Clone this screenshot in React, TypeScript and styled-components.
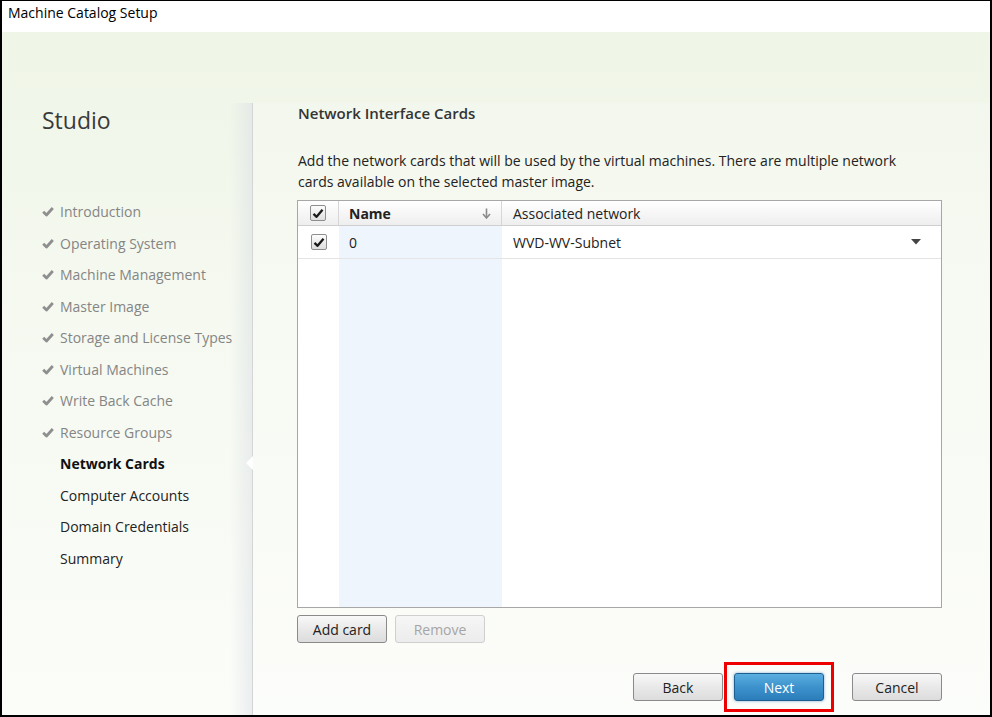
import React from "react";
import styled, { createGlobalStyle } from "styled-components";

const Global = createGlobalStyle`
  html, body { margin: 0; padding: 0; width: 992px; height: 717px; overflow: hidden; background: #fff; }
  body { font-family: "Open Sans", "Noto Sans", sans-serif; }
  * { box-sizing: border-box; }
`;

const Window = styled.div`
  width: 992px;
  height: 717px;
  border: 2px solid #000;
  border-top-width: 1px;
  display: flex;
  flex-direction: column;
  background: #fff;
`;

const TitleBar = styled.div`
  height: 31px;
  flex: none;
  background: #fff;
  padding: 3px 0 0 6px;
  font-size: 14px;
  line-height: 18px;
  color: #000;
`;

const Body = styled.div`
  flex: 1;
  display: flex;
  min-height: 0;
  background: linear-gradient(#eff5e7 0%, #f5f9f0 40%, #fbfdf9 100%);
`;

const Sidebar = styled.aside`
  width: 251px;
  flex: none;
  position: relative;
  padding: 73px 0 0 40px;

  &::after {
    content: "";
    position: absolute;
    top: 71px;
    right: 0;
    bottom: 0;
    width: 22px;
    background: linear-gradient(to right, rgba(225, 229, 234, 0) 0%, rgba(214, 219, 226, 0.45) 100%);
    border-right: 1px solid #d3d5d7;
  }
`;

const Notch = styled.div`
  position: absolute;
  right: 0;
  top: 424px;
  width: 0;
  height: 0;
  border-top: 7px solid transparent;
  border-bottom: 7px solid transparent;
  border-right: 7px solid #fff;
  z-index: 1;
`;

const Brand = styled.h1`
  margin: 0;
  font-size: 23px;
  line-height: 30px;
  font-weight: 500;
  color: #3a3a3a;
`;

const Steps = styled.ul`
  list-style: none;
  margin: 61px 0 0;
  padding: 0;
`;

const Step = styled.li<{ $state: "done" | "current" | "todo" }>`
  height: 31.5px;
  display: flex;
  align-items: center;
  gap: 6px;
  padding-left: ${(p) => (p.$state === "done" ? "0" : "18px")};
  font-size: 14px;
  font-weight: ${(p) => (p.$state === "current" ? 700 : 400)};
  color: ${(p) => (p.$state === "done" ? "#858585" : p.$state === "current" ? "#111" : "#222")};
  white-space: nowrap;
`;

const Main = styled.main`
  flex: 1;
  display: flex;
  flex-direction: column;
  padding-top: 71px;
`;

const Panel = styled.section`
  flex: 1;
  display: flex;
  flex-direction: column;
  padding: 0 48px 0 44px;
  background: rgba(255, 255, 255, 0.18);
`;

const Heading = styled.h2`
  margin: 0 0 0 1px;
  font-size: 15px;
  line-height: 20px;
  font-weight: 600;
  color: #333;
`;

const Description = styled.p`
  margin: 27px 0 0 1px;
  font-size: 14px;
  line-height: 21px;
  color: #222;
  max-width: 616px;
`;

const Table = styled.div`
  margin-top: 8px;
  height: 408px;
  border: 1px solid #a7a7a7;
  display: flex;
  flex-direction: column;
  background: #fff;
`;

const HeaderRow = styled.div`
  display: grid;
  grid-template-columns: 41px 163px 1fr;
  height: 25px;
  background: linear-gradient(#ffffff, #eeeeee);
  border-bottom: 1px solid #cfcfcf;
  flex: none;
`;

const HeaderCell = styled.div<{ $bold?: boolean; $center?: boolean }>`
  display: flex;
  align-items: center;
  justify-content: ${(p) => (p.$center ? "center" : "space-between")};
  padding: ${(p) => (p.$center ? "0" : "0 10px 0 10px")};
  border-right: 1px solid #d6d6d6;
  font-size: 14px;
  font-weight: ${(p) => (p.$bold ? 700 : 400)};
  color: #222;
  &:last-child { border-right: none; padding-left: 11px; }
`;

const TableBody = styled.div`
  flex: 1;
  display: flex;
  flex-direction: column;
  background: linear-gradient(to right, #fff 41px, #eef5fd 41px, #eef5fd 204px, #fff 204px);
`;

const DataRow = styled.div`
  display: grid;
  grid-template-columns: 41px 163px 1fr;
  height: 33px;
  border-bottom: 1px solid #e4e4e4;
`;

const Cell = styled.div<{ $center?: boolean }>`
  display: flex;
  align-items: center;
  justify-content: ${(p) => (p.$center ? "center" : "space-between")};
  padding: ${(p) => (p.$center ? "0" : "0 10px")};
  font-size: 14px;
  color: #222;
  &:last-child { padding: 0 20px 0 11px; }
`;

const Box = styled.span`
  width: 16px;
  height: 16px;
  border: 1px solid #8e8e8e;
  border-radius: 2px;
  background: linear-gradient(#fdfdfd, #dedede);
  display: inline-flex;
  align-items: center;
  justify-content: center;
`;

const ButtonRow = styled.div`
  display: flex;
  gap: 8px;
  margin-top: 7px;
`;

const Button = styled.button<{ $variant?: "primary" | "disabled" }>`
  width: 90px;
  height: 28px;
  padding: 0;
  font-family: "Open Sans", "Noto Sans", sans-serif;
  font-size: 14px;
  border-radius: 3px;
  border: 1px solid
    ${(p) => (p.$variant === "primary" ? "#1e5f92" : p.$variant === "disabled" ? "#cfcfcf" : "#8a8a8a")};
  background: ${(p) =>
    p.$variant === "primary"
      ? "linear-gradient(#5aaee0, #3d92cc 50%, #2b7dba)"
      : p.$variant === "disabled"
      ? "linear-gradient(#f6f6f6, #ececec)"
      : "linear-gradient(#f8f8f8, #e9e9e9 50%, #dcdcdc)"};
  color: ${(p) => (p.$variant === "primary" ? "#fff" : p.$variant === "disabled" ? "#a5a5a5" : "#222")};
  box-shadow: ${(p) => (p.$variant === "primary" ? "0 0 3px rgba(40,120,190,0.6)" : "none")};
`;

const Footer = styled.div`
  display: flex;
  justify-content: flex-end;
  align-items: center;
  margin-top: 19px;
`;

const Highlight = styled.div`
  width: 110px;
  height: 50px;
  border: 3px solid #ee0000;
  display: flex;
  align-items: center;
  justify-content: center;
  margin: 0 18px 0 1px;
`;

const DoneCheck = () => (
  <svg width="12" height="11" viewBox="0 0 12 11">
    <path d="M1.2 5.8 L4.5 9 L10.8 2" fill="none" stroke="#8f8f8f" strokeWidth="2.8" strokeLinejoin="round" />
  </svg>
);

const BoxCheck = () => (
  <svg width="12" height="11" viewBox="0 0 12 11">
    <path d="M1.5 5.8 L4.6 8.8 L10.5 1.8" fill="none" stroke="#1a1a1a" strokeWidth="2.3" strokeLinejoin="round" />
  </svg>
);

const SortArrow = () => (
  <svg width="9" height="11" viewBox="0 0 9 11">
    <path d="M4.5 0.5 V9" stroke="#8a8a8a" strokeWidth="1.6" />
    <path d="M1 6 L4.5 10 L8 6" fill="none" stroke="#8a8a8a" strokeWidth="1.6" />
  </svg>
);

const Caret = () => (
  <svg width="10" height="6" viewBox="0 0 10 6">
    <path d="M0 0 H10 L5 5.5 Z" fill="#444" />
  </svg>
);

const steps: { label: string; state: "done" | "current" | "todo" }[] = [
  { label: "Introduction", state: "done" },
  { label: "Operating System", state: "done" },
  { label: "Machine Management", state: "done" },
  { label: "Master Image", state: "done" },
  { label: "Storage and License Types", state: "done" },
  { label: "Virtual Machines", state: "done" },
  { label: "Write Back Cache", state: "done" },
  { label: "Resource Groups", state: "done" },
  { label: "Network Cards", state: "current" },
  { label: "Computer Accounts", state: "todo" },
  { label: "Domain Credentials", state: "todo" },
  { label: "Summary", state: "todo" },
];

export default function App() {
  return (
    <>
      <Global />
      <Window>
        <TitleBar>Machine Catalog Setup</TitleBar>
        <Body>
          <Sidebar>
            <Brand>Studio</Brand>
            <Steps>
              {steps.map((s) => (
                <Step key={s.label} $state={s.state}>
                  {s.state === "done" && <DoneCheck />}
                  {s.label}
                </Step>
              ))}
            </Steps>
            <Notch />
          </Sidebar>
          <Main>
            <Panel>
              <Heading>Network Interface Cards</Heading>
              <Description>
                Add the network cards that will be used by the virtual machines. There are multiple network cards
                available on the selected master image.
              </Description>
              <Table>
                <HeaderRow>
                  <HeaderCell $center>
                    <Box>
                      <BoxCheck />
                    </Box>
                  </HeaderCell>
                  <HeaderCell $bold>
                    Name
                    <SortArrow />
                  </HeaderCell>
                  <HeaderCell>Associated network</HeaderCell>
                </HeaderRow>
                <TableBody>
                  <DataRow>
                    <Cell $center>
                      <Box>
                        <BoxCheck />
                      </Box>
                    </Cell>
                    <Cell>0</Cell>
                    <Cell>
                      WVD-WV-Subnet
                      <Caret />
                    </Cell>
                  </DataRow>
                </TableBody>
              </Table>
              <ButtonRow>
                <Button>Add card</Button>
                <Button $variant="disabled" disabled>
                  Remove
                </Button>
              </ButtonRow>
              <Footer>
                <Button>Back</Button>
                <Highlight>
                  <Button $variant="primary">Next</Button>
                </Highlight>
                <Button>Cancel</Button>
              </Footer>
            </Panel>
          </Main>
        </Body>
      </Window>
    </>
  );
}
